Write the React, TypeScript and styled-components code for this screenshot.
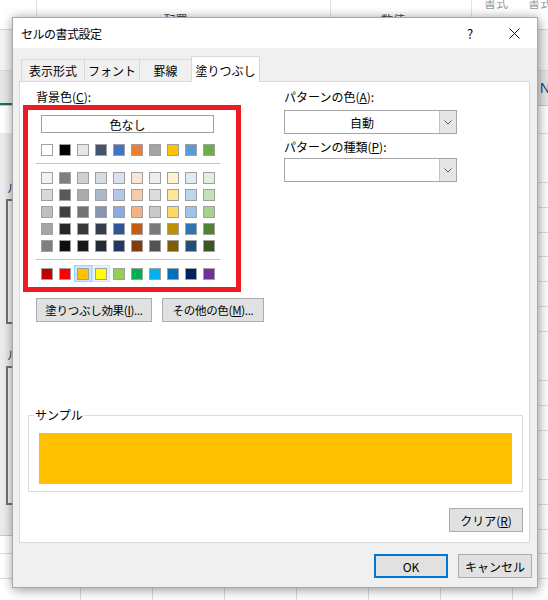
import React from 'react'
import styled, { createGlobalStyle } from 'styled-components'

const GlobalStyle = createGlobalStyle`
  html, body { margin: 0; padding: 0; }
  body {
    font-family: "Noto Sans CJK JP", "Noto Sans", sans-serif;
    font-size: 12px;
    color: #000;
  }
`

const THEME_ROW = ['#ffffff', '#000000', '#e7e6e6', '#44546a', '#4472c4', '#ed7d31', '#a5a5a5', '#ffc000', '#5b9bd5', '#70ad47']
const TINTS = [
  ['#f2f2f2', '#7f7f7f', '#d0cece', '#d6dce4', '#d9e2f3', '#fbe5d6', '#ededed', '#fff2cc', '#deebf7', '#e2f0d9'],
  ['#d9d9d9', '#595959', '#aeabab', '#adb9ca', '#b4c7e7', '#f8cbad', '#dbdbdb', '#ffe699', '#bdd7ee', '#c5e0b4'],
  ['#bfbfbf', '#404040', '#767171', '#8497b0', '#8faadc', '#f4b183', '#c9c9c9', '#ffd966', '#9dc3e6', '#a9d18e'],
  ['#a6a6a6', '#262626', '#3b3838', '#333f50', '#2f5597', '#c55a11', '#7b7b7b', '#bf9000', '#2e75b6', '#548235'],
  ['#7f7f7f', '#0d0d0d', '#171717', '#222a35', '#203864', '#843c0c', '#525252', '#7f6000', '#1f4e79', '#385723'],
]
const STANDARD = ['#c00000', '#ff0000', '#ffc000', '#ffff00', '#92d050', '#00b050', '#00b0f0', '#0070c0', '#002060', '#7030a0']

const TABS = [
  { label: '表示形式', w: 64 },
  { label: 'フォント', w: 56 },
  { label: '罫線', w: 53 },
  { label: '塗りつぶし', w: 69, active: true },
]

/* ---------- spreadsheet behind the dialog ---------- */

const Screen = styled.div`
  position: relative;
  width: 548px;
  height: 600px;
  overflow: hidden;
  background: #fff;
  display: flex;
  flex-direction: column;
`

const Ribbon = styled.div`
  height: 29px;
  flex-shrink: 0;
  display: flex;
  background: #fff;
  border-bottom: 1px solid #d5d5d5;
`

const RibbonGroup = styled.div<{ $w: number }>`
  width: ${p => p.$w}px;
  flex-shrink: 0;
  box-sizing: border-box;
  border-right: 1px solid #e1e1e1;
  display: flex;
  align-items: flex-end;
  justify-content: center;
  padding: 0 16px 1px 0;
  color: #444;
`

const RibbonTopText = styled.div`
  flex-shrink: 0;
  align-self: flex-start;
  margin-top: -6px;
  display: flex;
  gap: 20px;
  padding-left: 12px;
  color: #9a9a9a;
  font-size: 12px;
  white-space: nowrap;
`

const FormulaBand = styled.div`
  height: 40px;
  flex-shrink: 0;
  background: #f3f3f3;
  border-bottom: 1px solid #dadada;
`

const HeaderBand = styled.div`
  height: 34px;
  flex-shrink: 0;
  background: #e6e6e6;
  border-bottom: 1px solid #c8c8c8;
  display: flex;
  align-items: flex-end;
  justify-content: space-between;
`

const ActiveHead = styled.div`
  width: 40px;
  height: 2px;
  background: #217346;
`

const HeadLetter = styled.div`
  align-self: center;
  margin-right: -2px;
  color: #1f3f77;
  font-family: "Liberation Sans", sans-serif;
  font-size: 14px;
`

const Grid = styled.div`
  flex: 1;
  background-color: #fff;
  background-image:
    repeating-linear-gradient(to right, transparent 0 71px, #dcdcdc 71px 72px),
    repeating-linear-gradient(to bottom, transparent 0 23.75px, #dcdcdc 23.75px 24.75px);
  background-position: 9px 0, 0 3px;
`

const SidePane = styled.div`
  position: absolute;
  left: 0;
  top: 133px;
  width: 300px;
  height: 403px;
  box-sizing: border-box;
  background: #ebebeb;
  border-bottom: 1px solid #c8c8c8;
  padding: 48px 0 0 6px;
  display: flex;
  flex-direction: column;
  gap: 4px;
`

const PaneLabel = styled.div`
  padding-left: 1px;
  color: #2b2b6b;
  line-height: 14px;
`

const PaneBox = styled.div<{ $h: number }>`
  height: ${p => p.$h}px;
  border: 2px solid #737373;
  background: #f2f2f2;
  margin-bottom: 20px;
`

/* ---------- dialog ---------- */

const Dialog = styled.div`
  position: absolute;
  left: 12px;
  top: 17px;
  width: 526px;
  height: 571px;
  box-sizing: border-box;
  background: #f0f0f0;
  border: 1px solid #a8a8a8;
  box-shadow: 0 0 10px rgba(0, 0, 0, 0.28), 2px 4px 10px rgba(0, 0, 0, 0.18);
  display: flex;
  flex-direction: column;
  z-index: 2;
`

const TitleBar = styled.div`
  height: 30px;
  flex-shrink: 0;
  background: #fff;
  display: flex;
  align-items: center;
  padding-left: 8px;
`

const Title = styled.div`
  flex: 1;
  font-size: 12px;
  letter-spacing: -0.5px;
`

const HelpButton = styled.div`
  width: 28px;
  margin-right: 8px;
  text-align: center;
  font-size: 13px;
`

const CloseButton = styled.div`
  width: 45px;
  height: 30px;
  display: flex;
  align-items: center;
  justify-content: center;
`

const TabRow = styled.div`
  display: flex;
  align-items: flex-end;
  height: 25px;
  margin: 8px 0 0 8px;
`

const Tab = styled.div<{ $w: number; $active?: boolean }>`
  width: ${p => p.$w}px;
  height: ${p => (p.$active ? 26 : 22)}px;
  box-sizing: border-box;
  border: 1px solid #d9d9d9;
  border-bottom: none;
  background: ${p => (p.$active ? '#fff' : '#f0f0f0')};
  display: flex;
  align-items: center;
  justify-content: center;
  padding-top: ${p => (p.$active ? 1 : 0)}px;
  margin-bottom: ${p => (p.$active ? -1 : 0)}px;
  position: relative;
  z-index: ${p => (p.$active ? 1 : 0)};
  & + & { margin-left: -1px; }
`

const Panel = styled.div`
  width: 511px;
  height: 462px;
  margin-left: 6px;
  box-sizing: border-box;
  border: 1px solid #d9d9d9;
  background: #fff;
  display: flex;
  flex-direction: column;
`

const TopArea = styled.div`
  display: flex;
  padding: 7px 0 0 3px;
`

const LeftCol = styled.div`
  width: 218px;
  flex-shrink: 0;
  display: flex;
  flex-direction: column;
`

const RightCol = styled.div`
  margin-left: 43px;
  display: flex;
  flex-direction: column;
`

const FieldLabel = styled.div<{ $indent?: number; $gap?: number }>`
  height: 16px;
  line-height: 16px;
  margin-left: ${p => p.$indent ?? 0}px;
  margin-top: ${p => p.$gap ?? 0}px;
  white-space: nowrap;
`

const RedBox = styled.div`
  box-sizing: border-box;
  width: 218px;
  height: 187px;
  border: 5px solid #ed1c24;
  padding: 5px 0;
  display: flex;
  flex-direction: column;
`

const NoColorButton = styled.div`
  width: 173px;
  height: 18px;
  margin-left: 13px;
  box-sizing: border-box;
  border: 1px solid #a0a0a0;
  display: flex;
  align-items: center;
  justify-content: center;
`

const SwatchGrid = styled.div<{ $gap?: number }>`
  display: grid;
  grid-template-columns: repeat(10, 18px);
  grid-auto-rows: 17px;
  margin: ${p => p.$gap ?? 0}px 0 0 10px;
`

const Cell = styled.div<{ $state?: 'selected' | 'hover' }>`
  box-sizing: border-box;
  padding: 2px 0 0 2px;
  border: 1px solid
    ${p => (p.$state === 'selected' ? '#99d1ff' : p.$state === 'hover' ? '#cce8ff' : 'transparent')};
  background: ${p => (p.$state === 'selected' ? '#cce8ff' : p.$state === 'hover' ? '#e5f3ff' : 'transparent')};
`

const Swatch = styled.div<{ $c: string }>`
  width: 12px;
  height: 12px;
  box-sizing: border-box;
  border: 1px solid #a0a0a0;
  background: ${p => p.$c};
`

const Separator = styled.div`
  width: 184px;
  height: 1px;
  margin: 5px 0 5px 8px;
  background: #c4c4c4;
`

const ActionRow = styled.div`
  display: flex;
  gap: 10px;
  margin: 6px 0 0 13px;
  width: max-content;
`

const Button = styled.div<{ $w: number; $default?: boolean; $tight?: boolean }>`
  width: ${p => p.$w}px;
  height: 24px;
  flex-shrink: 0;
  box-sizing: border-box;
  background: #e1e1e1;
  border: ${p => (p.$default ? '2px solid #0078d7' : '1px solid #adadad')};
  display: flex;
  align-items: center;
  justify-content: center;
  white-space: nowrap;
  font-size: ${p => (p.$tight ? 11.5 : 12)}px;
  letter-spacing: ${p => (p.$tight ? -0.3 : 0)}px;
`

const Select = styled.div<{ $gap?: number }>`
  width: 173px;
  height: 24px;
  margin-top: ${p => p.$gap ?? 0}px;
  box-sizing: border-box;
  border: 1px solid #a6a6a6;
  background: #fff;
  display: flex;
`

const SelectValue = styled.div`
  flex: 1;
  display: flex;
  align-items: center;
  justify-content: center;
`

const SelectArrow = styled.div`
  width: 16px;
  background: #e6e6e6;
  border-left: 1px solid #c4c4c4;
  display: flex;
  align-items: center;
  justify-content: center;
`

const SampleGroup = styled.div`
  position: relative;
  height: 77px;
  margin: 93px 6px 0 8px;
  box-sizing: border-box;
  border: 1px solid #dcdcdc;
  padding: 17px 10px 7px 10px;
`

const SampleLabel = styled.span`
  position: absolute;
  top: -9px;
  left: 5px;
  padding: 0 1px;
  background: #fff;
  line-height: 16px;
`

const SampleFill = styled.div`
  height: 51px;
  background: #ffc000;
`

const ClearRow = styled.div`
  display: flex;
  justify-content: flex-end;
  margin: 16px 6px 0 0;
`

const Footer = styled.div`
  display: flex;
  justify-content: flex-end;
  gap: 10px;
  margin-top: 11px;
  padding-right: 5px;
`

const Chevron = () => (
  <svg width="8" height="5" viewBox="0 0 8 5">
    <path d="M0.5 0.5 L4 4 L7.5 0.5" fill="none" stroke="#606060" strokeWidth="1" />
  </svg>
)

const CloseIcon = () => (
  <svg width="11" height="11" viewBox="0 0 11 11">
    <path d="M0.5 0.5 L10.5 10.5 M10.5 0.5 L0.5 10.5" stroke="#111" strokeWidth="1" />
  </svg>
)

const SwatchLine = ({ colors, gap, selected, hover }: { colors: string[]; gap?: number; selected?: number; hover?: number }) => (
  <SwatchGrid $gap={gap}>
    {colors.map((c, i) => (
      <Cell key={i} $state={i === selected ? 'selected' : i === hover ? 'hover' : undefined}>
        <Swatch $c={c} />
      </Cell>
    ))}
  </SwatchGrid>
)

export default function App() {
  return (
    <Screen>
      <GlobalStyle />
      <Ribbon>
        <RibbonGroup $w={37} />
        <RibbonGroup $w={294}>配置</RibbonGroup>
        <RibbonGroup $w={141}>数値</RibbonGroup>
        <RibbonTopText>
          <span>書式</span>
          <span>書式</span>
        </RibbonTopText>
      </Ribbon>
      <FormulaBand />
      <HeaderBand>
        <ActiveHead />
        <HeadLetter>N</HeadLetter>
      </HeaderBand>
      <Grid />

      <SidePane>
        <PaneLabel>ルール</PaneLabel>
        <PaneBox $h={121} />
        <PaneLabel>ルール</PaneLabel>
        <PaneBox $h={135} />
      </SidePane>

      <Dialog>
        <TitleBar>
          <Title>セルの書式設定</Title>
          <HelpButton>?</HelpButton>
          <CloseButton>
            <CloseIcon />
          </CloseButton>
        </TitleBar>

        <TabRow>
          {TABS.map(t => (
            <Tab key={t.label} $w={t.w} $active={t.active}>
              {t.label}
            </Tab>
          ))}
        </TabRow>

        <Panel>
          <TopArea>
            <LeftCol>
              <FieldLabel $indent={13}>
                背景色(<u>C</u>):
              </FieldLabel>
              <RedBox>
                <NoColorButton>色なし</NoColorButton>
                <SwatchLine colors={THEME_ROW} gap={8} />
                <Separator />
                {TINTS.map((row, i) => (
                  <SwatchLine key={i} colors={row} />
                ))}
                <Separator />
                <SwatchLine colors={STANDARD} selected={2} hover={3} />
              </RedBox>
              <ActionRow>
                <Button $w={116} $tight>
                  塗りつぶし効果(<u>I</u>)...
                </Button>
                <Button $w={102} $tight>
                  その他の色(<u>M</u>)...
                </Button>
              </ActionRow>
            </LeftCol>

            <RightCol>
              <FieldLabel>
                パターンの色(<u>A</u>):
              </FieldLabel>
              <Select $gap={5}>
                <SelectValue>自動</SelectValue>
                <SelectArrow>
                  <Chevron />
                </SelectArrow>
              </Select>
              <FieldLabel $gap={5}>
                パターンの種類(<u>P</u>):
              </FieldLabel>
              <Select $gap={3}>
                <SelectValue />
                <SelectArrow>
                  <Chevron />
                </SelectArrow>
              </Select>
            </RightCol>
          </TopArea>

          <SampleGroup>
            <SampleLabel>サンプル</SampleLabel>
            <SampleFill />
          </SampleGroup>

          <ClearRow>
            <Button $w={74}>
              クリア(<u>R</u>)
            </Button>
          </ClearRow>
        </Panel>

        <Footer>
          <Button $w={74} $default>
            OK
          </Button>
          <Button $w={74}>キャンセル</Button>
        </Footer>
      </Dialog>
    </Screen>
  )
}
